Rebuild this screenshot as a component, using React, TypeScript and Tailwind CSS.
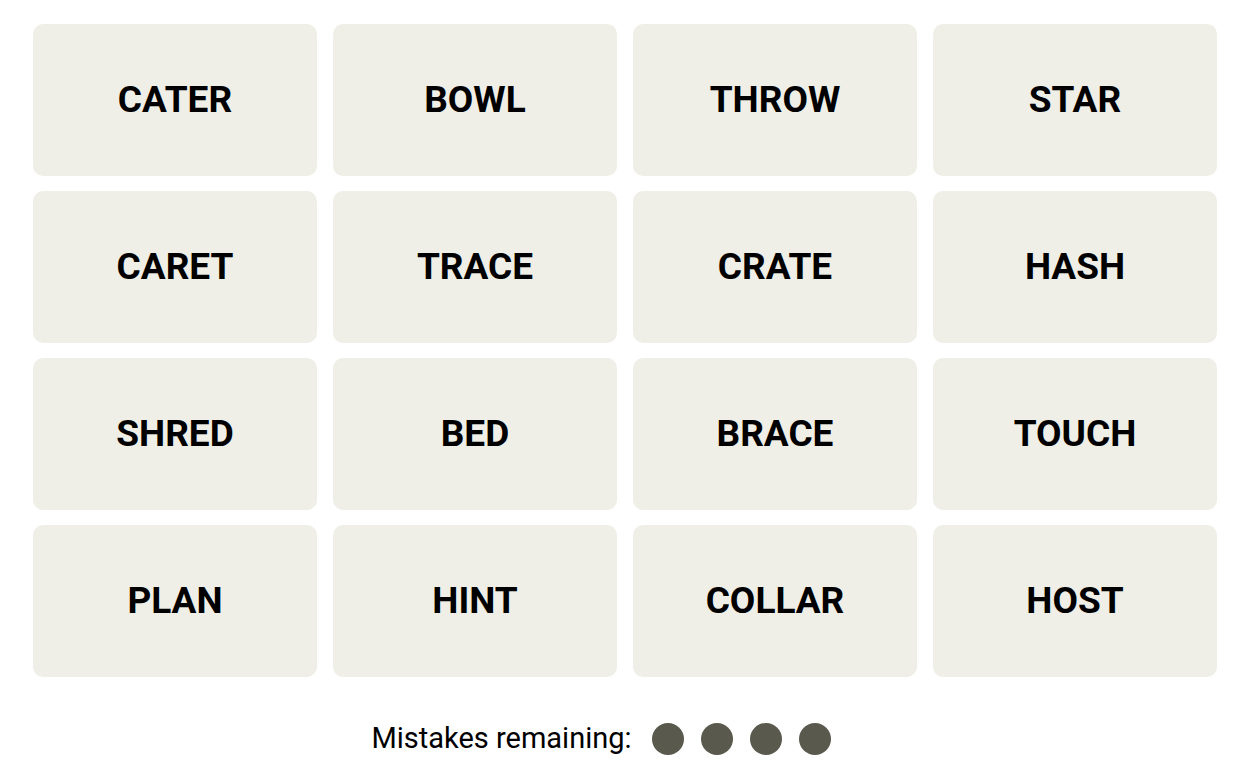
const words = [
  'CATER', 'BOWL', 'THROW', 'STAR',
  'CARET', 'TRACE', 'CRATE', 'HASH',
  'SHRED', 'BED', 'BRACE', 'TOUCH',
  'PLAN', 'HINT', 'COLLAR', 'HOST',
]

export default function App() {
  return (
    <div className="w-[1250px] h-[782px] bg-white overflow-hidden" style={{ fontFamily: 'Roboto, "Liberation Sans", sans-serif' }}>
      <div className="grid grid-cols-4 gap-x-4 gap-y-[15px] pt-6 px-[33px]">
        {words.map((w) => (
          <button
            key={w}
            className="h-[152px] rounded-[10px] bg-[#efefe8] flex items-center justify-center text-[37px] font-bold text-black"
          >
            {w}
          </button>
        ))}
      </div>

      {/* Mistakes */}
      <div className="flex items-center justify-center pr-[48px] mt-[40px]">
        <span className="text-[29px] text-black">Mistakes remaining:</span>
        <div className="flex gap-[17px] ml-5">
          {[0, 1, 2, 3].map((i) => (
            <span key={i} className="w-8 h-8 rounded-full bg-[#5a594e]" />
          ))}
        </div>
      </div>
    </div>
  )
}
